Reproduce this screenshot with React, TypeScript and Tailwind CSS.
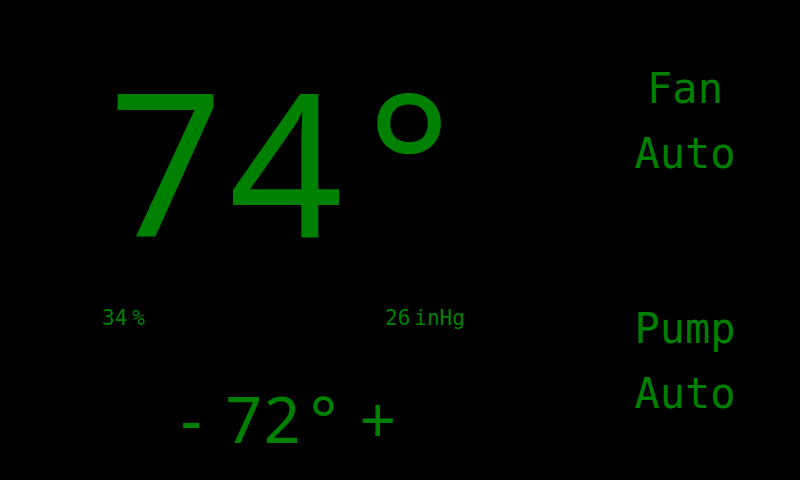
// Each character sits in a fixed-width cell, so Noto Sans glyphs line up like a monospace face.
function Cells({ text, cell }: { text: string; cell: string }) {
  return (
    <>
      {[...text].map((c, i) => (
        <span key={i} className={`inline-block text-center ${cell}`}>
          {c}
        </span>
      ))}
    </>
  );
}

export default function App() {
  return (
    <div className="w-[800px] h-[480px] bg-black text-[#008000] flex overflow-hidden font-['DejaVu_Sans_Mono',monospace]">
      {/* Left: current temp, stats, setpoint */}
      <div className="w-[570px] flex flex-col">
        <div className="mt-[60px] pl-[106px] h-[200px] text-[200px] leading-none whitespace-nowrap font-['Noto_Sans',sans-serif]">
          <Cells text="74" cell="w-[120px]" />
          <span className="inline-block w-[120px] text-center pl-[6px]">°</span>
        </div>

        <div className="mt-[48px] h-[21px] flex text-[21px] leading-none whitespace-nowrap">
          <div className="w-[385px] pl-[102px]">
            34<span className="ml-[5px]">%</span>
          </div>
          <div>
            26<span className="ml-[4px]">inHg</span>
          </div>
        </div>

        <div className="mt-[58px] pl-[172px] h-[64px] flex items-baseline text-[64px] leading-none whitespace-nowrap">
          <span className="inline-block w-[38.5px] text-center">-</span>
          <span className="ml-[14px] font-['Noto_Sans',sans-serif]">
            <Cells text="72" cell="w-[38.4px]" />
            <span className="inline-block w-[38.4px] text-center pl-[6px]">°</span>
          </span>
          <span className="ml-[19px] inline-block w-[38.4px] text-center font-['Noto_Sans',sans-serif]">+</span>
        </div>
      </div>

      {/* Right: fan / pump modes */}
      <div className="flex-1 flex flex-col items-center pt-[56px] text-[42px] leading-[65px] whitespace-nowrap">
        <div>Fan</div>
        <div>Auto</div>
        <div className="mt-[110px]">Pump</div>
        <div>Auto</div>
      </div>
    </div>
  );
}
